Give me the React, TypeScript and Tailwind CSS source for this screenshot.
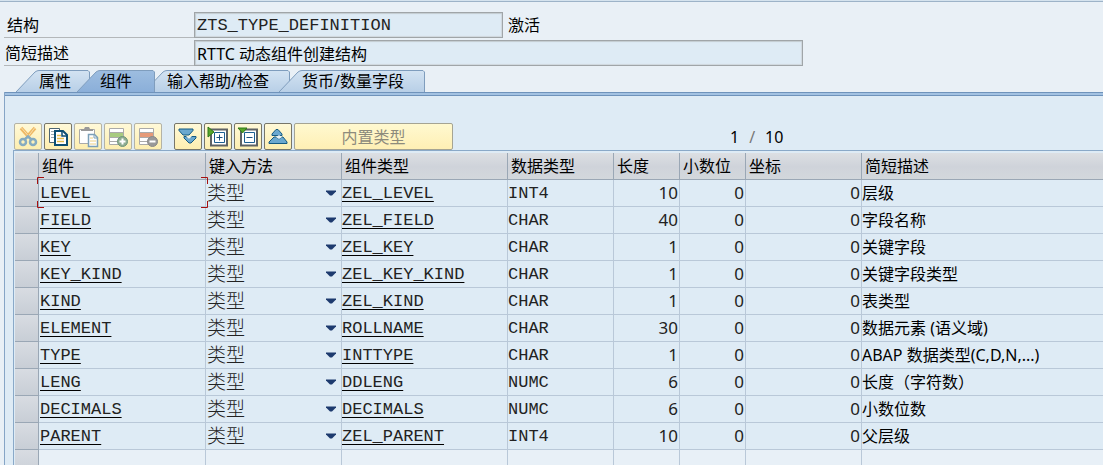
import React, { useState } from 'react';
import { clsx } from 'clsx';

interface Field {
  name: string;
  type: string;
  dataType: string;
  length: number;
  text: string;
}

const FIELDS: Field[] = [
  { name: 'LEVEL', type: 'ZEL_LEVEL', dataType: 'INT4', length: 10, text: '层级' },
  { name: 'FIELD', type: 'ZEL_FIELD', dataType: 'CHAR', length: 40, text: '字段名称' },
  { name: 'KEY', type: 'ZEL_KEY', dataType: 'CHAR', length: 1, text: '关键字段' },
  { name: 'KEY_KIND', type: 'ZEL_KEY_KIND', dataType: 'CHAR', length: 1, text: '关键字段类型' },
  { name: 'KIND', type: 'ZEL_KIND', dataType: 'CHAR', length: 1, text: '表类型' },
  { name: 'ELEMENT', type: 'ROLLNAME', dataType: 'CHAR', length: 30, text: '数据元素 (语义域)' },
  { name: 'TYPE', type: 'INTTYPE', dataType: 'CHAR', length: 1, text: 'ABAP 数据类型(C,D,N,...)' },
  { name: 'LENG', type: 'DDLENG', dataType: 'NUMC', length: 6, text: '长度（字符数）' },
  { name: 'DECIMALS', type: 'DECIMALS', dataType: 'NUMC', length: 6, text: '小数位数' },
  { name: 'PARENT', type: 'ZEL_PARENT', dataType: 'INT4', length: 10, text: '父层级' },
];

const COLUMNS = ['组件', '键入方法', '组件类型', '数据类型', '长度', '小数位', '坐标', '简短描述'];

const TABS = [
  { label: '属性', width: 74 },
  { label: '组件', width: 78 },
  { label: '输入帮助/检查', width: 146 },
  { label: '货币/数量字段', width: 146 },
];

const MONO = "font-['Liberation_Mono','Noto_Sans_CJK_SC',monospace] text-[17px] text-[#222]";
const CELL = 'h-[27px] border-r border-b border-[#b9c8d8] p-0 whitespace-nowrap';
const NUMBER = 'pr-px text-right text-[17px] text-[#222]';
const LINK = 'underline decoration-black underline-offset-3 [text-decoration-skip-ink:none]';
const INPUT =
  'h-[26px] shrink-0 border border-[#a0a5a8] bg-[#deebf5] px-[2px] shadow-[inset_1px_1px_1px_#c3cbd0,inset_-1px_-1px_1px_#d0d8dd] outline-none';

interface TabProps {
  label: string;
  width: number;
  active: boolean;
  onClick: () => void;
}

const Tab: React.FC<TabProps> = ({ label, width, active, onClick }) => (
  <button
    type="button"
    role="tab"
    aria-selected={active}
    onClick={onClick}
    style={{ width }}
    className={clsx('relative -mr-[11px] h-[22px] shrink-0 pl-[23px] text-left whitespace-nowrap', active && 'z-10 -ml-[2px]')}
  >
    <svg className="absolute inset-0" width={width} height="22" aria-hidden="true">
      <defs>
        <linearGradient id="tab-idle" x1="0" y1="0" x2="0" y2="1">
          <stop offset="0" stopColor="#d3e3f2" />
          <stop offset="1" stopColor="#b8cfe7" />
        </linearGradient>
        <linearGradient id="tab-active" x1="0" y1="0" x2="0" y2="1">
          <stop offset="0" stopColor="#9dbde0" />
          <stop offset="1" stopColor="#8bafd9" />
        </linearGradient>
      </defs>
      <path
        d={`M0 22 L19 2 Q21 0.5 23 0.5 H${width - 2} L${width - 0.5} 2 V22`}
        fill={active ? 'url(#tab-active)' : 'url(#tab-idle)'}
        stroke="#7f9dbd"
      />
    </svg>
    <span className="relative">{label}</span>
  </button>
);

interface ToolButtonProps {
  title: string;
  disabled?: boolean;
  children: React.ReactNode;
}

const ToolButton: React.FC<ToolButtonProps> = ({ title, disabled, children }) => (
  <button
    type="button"
    title={title}
    disabled={disabled}
    className={clsx(
      'flex h-[27px] w-7 items-center justify-center rounded-[2px] border bg-linear-to-b from-[#fff9d8] to-[#fdeeb0]',
      disabled ? 'border-[#b4b3a6]' : 'border-[#77766a]'
    )}
  >
    <svg width="22" height="22" viewBox="0 0 22 22" fill="none" aria-hidden="true">
      {children}
    </svg>
  </button>
);

// Red marks around the cell that has the cursor
const Corners = () => (
  <span className="pointer-events-none absolute -top-[3px] -right-[3px] -bottom-[2px] -left-[2px] z-10" aria-hidden="true">
    <svg className="absolute top-0 left-0" width="7" height="7" fill="none" stroke="#a50f0f">
      <path d="M0.5 7V0.5H7" />
    </svg>
    <svg className="absolute top-0 right-0" width="7" height="7" fill="none" stroke="#a50f0f">
      <path d="M0 0.5H6.500V7" />
    </svg>
    <svg className="absolute bottom-0 left-0" width="7" height="7" fill="none" stroke="#a50f0f">
      <path d="M0.5 0V6.500H7" />
    </svg>
    <svg className="absolute right-0 bottom-0" width="7" height="7" fill="none" stroke="#a50f0f">
      <path d="M6.500 0V6.500H0" />
    </svg>
  </span>
);

const Toolbar = () => (
  <div className="flex items-center gap-[2px] pl-px">
    <ToolButton title="剪切" disabled>
      <path d="m4 2 8 9M18 2l-8 9" stroke="#efb964" strokeWidth="3.500" />
      <path d="m4.500 2 7 8 6-8" stroke="#f7dfae" />
      <path d="m7 14 4-3.500 4 3.500" stroke="#86abc0" strokeWidth="2.500" />
      <circle cx="6" cy="16" r="3" stroke="#86abc0" strokeWidth="2.500" />
      <circle cx="16" cy="16" r="3" stroke="#86abc0" strokeWidth="2.500" />
    </ToolButton>
    <ToolButton title="复制">
      <path d="M2.500 2.500h10v14h-10z" fill="#fff" stroke="#4d6573" />
      <path d="M4 5.500h5M4 8.500h3M4 11.500h3" stroke="#9aa8b0" />
      <path d="M8 5h8l4 4v10H8z" fill="#fff" stroke="#0d4f73" strokeWidth="2" />
      <path d="M15 5v5h5" stroke="#0d4f73" strokeWidth="1.500" />
      <path d="M10 9.500h4M10 12.500h7M10 15.500h7" stroke="#e5bd4c" strokeWidth="1.500" />
    </ToolButton>
    <ToolButton title="粘贴" disabled>
      <path d="M2.500 3.500h15v14h-15z" fill="#fff" stroke="#aaa" />
      <path d="M4 5V3h3l1-2h4l1 2h3v2z" fill="#999" />
      <path d="M11.500 8.500h6l3 3v9h-9z" fill="#fff" stroke="#7ca0b8" strokeWidth="1.500" />
      <path d="M17 8v4h4" stroke="#7ca0b8" />
      <path d="M13 12h3M13 15h6M13 18h6" stroke="#edcf82" />
    </ToolButton>
    <ToolButton title="插入行" disabled>
      <path d="M2.500 2.500h14v16h-14z" fill="#fff" stroke="#aaa" />
      <path d="M3 7h13v4H3z" fill="#a8cb80" />
      <path d="M3 6.500h13M3 11.500h13M3 15.500h9" stroke="#aaa" />
      <circle cx="15.500" cy="15.500" r="5" fill="#90ad91" stroke="#6e957a" />
      <path d="M15.500 12.500v6M12.500 15.500h6" stroke="#fff" strokeWidth="2" />
    </ToolButton>
    <ToolButton title="删除行" disabled>
      <path d="M2.500 2.500h14v16h-14z" fill="#fff" stroke="#aaa" />
      <path d="M3 7h13v4H3z" fill="#e69a78" />
      <path d="M3 6.500h13M3 11.500h13M3 15.500h9" stroke="#aaa" />
      <circle cx="15.500" cy="15.500" r="5" fill="#999" stroke="#888" />
      <path d="M12.500 15.500h6" stroke="#fff" strokeWidth="2" />
    </ToolButton>
    <span className="w-2" />
    <ToolButton title="全部展开">
      <path d="M2 3h14v1.500L12 9H6L2 4.500z" fill="#6ba8cf" stroke="#155a82" />
      <path d="M7 10.500h2l3 2 3-2h4V12l-5 5h-2l-5-5z" fill="#6ba8cf" stroke="#155a82" />
      <path d="m9 10.500 3 2.500 3-2.500z" fill="#e8f2f7" />
    </ToolButton>
    <ToolButton title="展开包含">
      <path d="M4 3.500h16v16H4z" fill="#fff" stroke="#5e6264" strokeWidth="2" />
      <path d="M7.500 6.500h10v10h-10z" stroke="#1c5f91" />
      <path d="M12.500 8.500v6M9.500 11.500h6" stroke="#1c4f80" />
      <path d="m1 1 6 5-6 5z" fill="#57a52a" stroke="#2f7818" />
    </ToolButton>
    <ToolButton title="折叠包含">
      <path d="M4 3.500h16v16H4z" fill="#fff" stroke="#5e6264" strokeWidth="2" />
      <path d="M7.500 6.500h10v10h-10z" stroke="#1c5f91" />
      <path d="M9.500 11.500h6" stroke="#1c4f80" />
      <path d="M1 2h9L5.500 7z" fill="#57a52a" stroke="#2f7818" />
    </ToolButton>
    <ToolButton title="全部折叠">
      <path d="M5 9.500V8l4-4.500h2L15 8v1.500z" fill="#6ba8cf" stroke="#155a82" />
      <path d="M2 17.500V16l5-5h2l3 2 3-2h1l4 5v1.500z" fill="#6ba8cf" stroke="#155a82" />
      <path d="m9 11 3-2 3 2-3 2z" fill="#e8f2f7" />
    </ToolButton>
    <button
      type="button"
      disabled
      className="h-[27px] w-[159px] rounded-[2px] border border-[#a5a493] bg-linear-to-b from-[#fff9d0] to-[#feefb4] text-[#8d8b7c]"
    >
      内置类型
    </button>
    <span className="ml-[275px] flex gap-[10px]">
      <span>1</span>
      <span className="text-[#777]">/</span>
      <span>10</span>
    </span>
  </div>
);

const FieldTable = () => (
  <table className="w-full table-fixed border-separate border-spacing-0">
    <colgroup>
      <col className="w-[24px]" />
      <col className="w-[167px]" />
      <col className="w-[136px]" />
      <col className="w-[166px]" />
      <col className="w-[106px]" />
      <col className="w-[66px]" />
      <col className="w-[66px]" />
      <col className="w-[116px]" />
      <col />
    </colgroup>
    <thead>
      <tr className="bg-linear-to-b from-[#dcdfe3] via-[#cfd3da] to-[#d3d8dc]">
        <th className="h-[27px] border-r border-b border-[#9aa7b5] p-0" />
        {COLUMNS.map(col => (
          <th
            key={col}
            className="h-[27px] border-r border-b border-[#9aa7b5] p-0 pl-[3px] text-left font-normal whitespace-nowrap last:border-r-0"
          >
            {col}
          </th>
        ))}
      </tr>
    </thead>
    <tbody>
      {FIELDS.map((f, i) => (
        <tr key={f.name} className="bg-[#deebf5]">
          <td className="h-[27px] border-r border-b border-[#9aa7b5] bg-linear-to-b from-[#d8dce2] to-[#c8ced6] p-0" />
          <td className={clsx(CELL, MONO, 'relative pt-px pl-px')}>
            <a href="#" className={LINK}>{f.name}</a>
            {i === 0 && <Corners />}
          </td>
          <td className={CELL}>
            <div className="flex items-center pr-[4px]">
              <select
                aria-label={`${f.name} 键入方法`}
                className="h-[26px] min-w-0 flex-1 appearance-none bg-transparent pl-px text-[19px] font-light text-[#222] outline-none"
              >
                <option>类型</option>
              </select>
              <svg width="12" height="7" viewBox="0 0 12 7" className="pointer-events-none" aria-hidden="true">
                <path d="M1 0.500h10v1L7 5.500H5L1 1.500z" fill="#1d3a6e" />
              </svg>
            </div>
          </td>
          <td className={clsx(CELL, MONO, 'pt-px')}>
            <a href="#" className={LINK}>{f.type}</a>
          </td>
          <td className={clsx(CELL, MONO, 'pt-px')}>{f.dataType}</td>
          <td className={clsx(CELL, NUMBER)}>{f.length}</td>
          <td className={clsx(CELL, NUMBER)}>0</td>
          <td className={clsx(CELL, NUMBER)}>0</td>
          <td className={clsx(CELL, 'border-r-0')}>{f.text}</td>
        </tr>
      ))}
      {/* Empty line below the last component */}
      <tr>
        <td className="h-[27px] border-r border-[#9aa7b5] bg-linear-to-b from-[#d8dce2] to-[#c8ced6] p-0" />
        {COLUMNS.map(col => (
          <td key={col} className="border-r border-[#b9c8d8] bg-[#e8f0f7] p-0 last:border-r-0" />
        ))}
      </tr>
    </tbody>
  </table>
);

const App: React.FC = () => {
  const [tab, setTab] = useState(1);

  return (
    <main className="h-screen overflow-hidden bg-[#e9f0f6] font-['Noto_Sans','Noto_Sans_CJK_SC',sans-serif] text-base leading-[22px] text-black">
      <div className="h-[2px] border-b border-[#9db3c8] bg-[#d5e3ee]" />

      {/* Structure name and short text */}
      <div className="flex flex-col gap-[2px] pt-[10px] pl-[4px]">
        <div className="flex h-[26px] items-center">
          <label htmlFor="struct" className="h-[26px] w-[190px] shrink-0 border-b border-[#b3b7ba] pt-[2px] pl-[3px]">
            结构
          </label>
          <input id="struct" readOnly defaultValue="ZTS_TYPE_DEFINITION" className={clsx(INPUT, MONO, 'w-[309px]')} />
          <span className="pl-[5px] whitespace-nowrap">激活</span>
        </div>
        <div className="flex h-[26px] items-center">
          <label htmlFor="desc" className="h-[26px] w-[190px] shrink-0 border-b border-[#b3b7ba] pt-[2px] pl-px">
            简短描述
          </label>
          <input id="desc" readOnly defaultValue="RTTC 动态组件创建结构" className={clsx(INPUT, 'w-[609px]')} />
        </div>
      </div>

      <div role="tablist" className="flex pt-[4px] pl-[16px]">
        {TABS.map((t, i) => (
          <Tab key={t.label} label={t.label} width={t.width} active={tab === i} onClick={() => setTab(i)} />
        ))}
      </div>

      <section className="ml-[4px] border-l border-[#86a5c6] bg-[#deebf5]">
        <div className="h-[4px] border-y border-[#6f93bb] bg-[#a3c2e2]" />
        <div className="pt-[27px] pl-[8px]">
          <Toolbar />
          <div className="border-t border-l border-[#8aa9c8] pt-[2px] pl-px">
            <FieldTable />
          </div>
        </div>
      </section>
    </main>
  );
};

export default App;
